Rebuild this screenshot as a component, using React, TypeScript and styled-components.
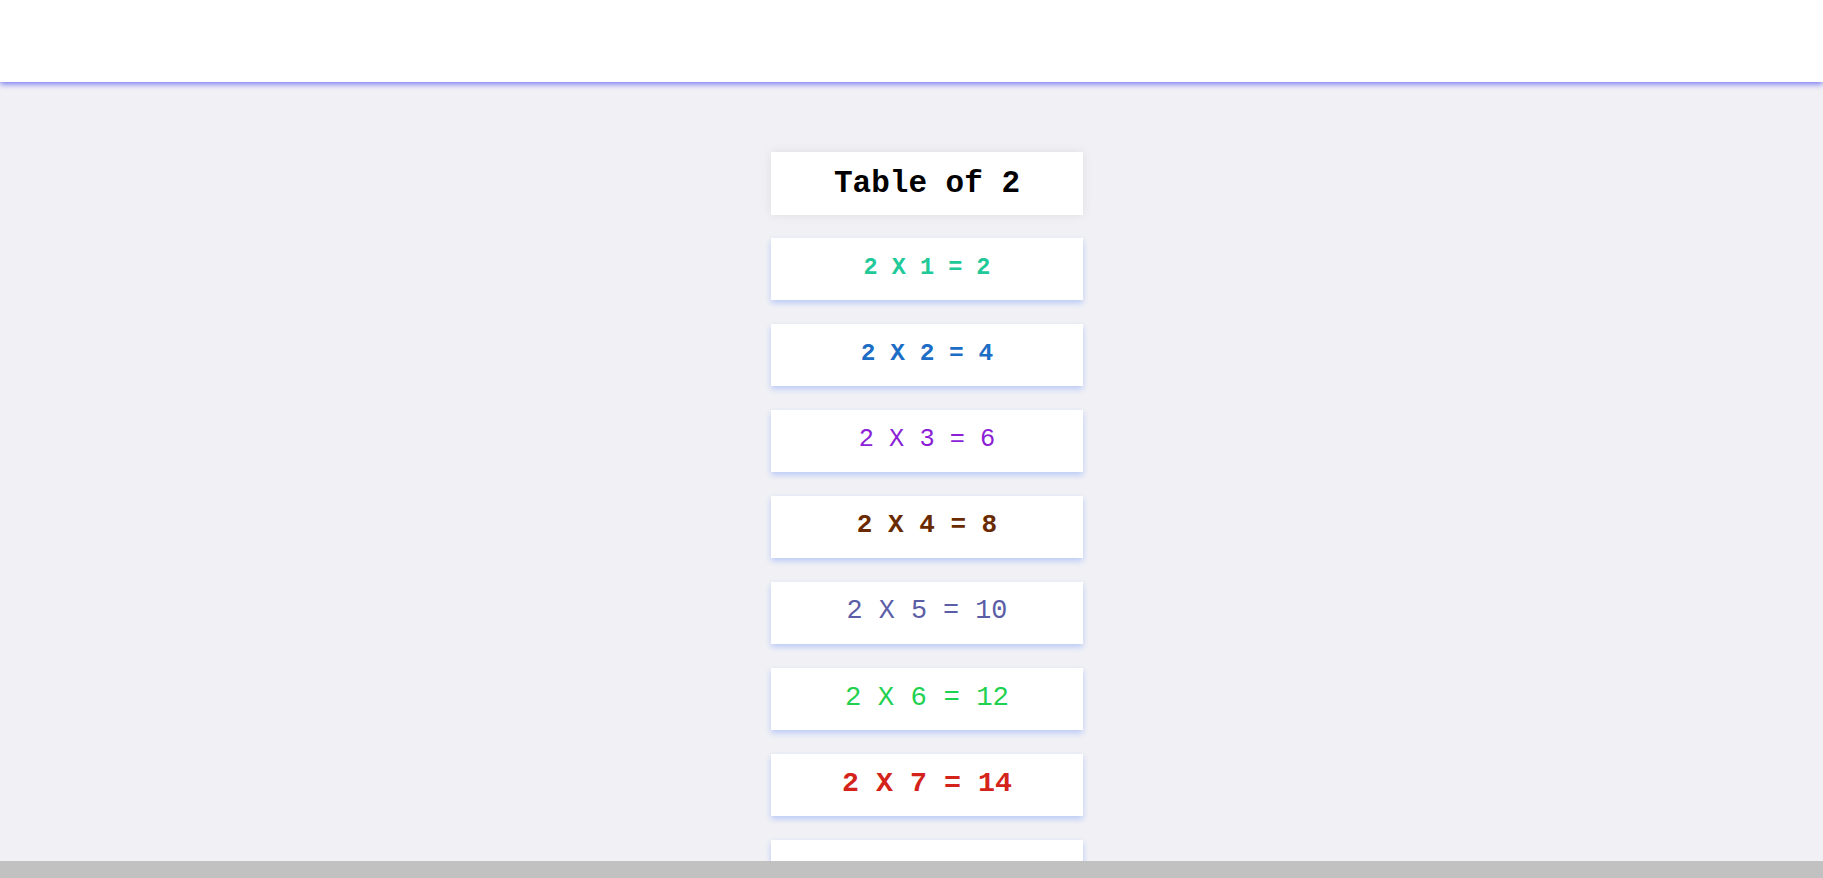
import React from "react";
import styled, { createGlobalStyle } from "styled-components";

const GlobalStyle = createGlobalStyle`
  html, body {
    margin: 0;
    padding: 0;
    background: #f1f1f5;
    font-family: "Courier New", "Nimbus Mono PS", "FreeMono", "Liberation Mono", monospace;
    overflow: hidden;
  }
`;

const Header = styled.header`
  height: 82px;
  background: #ffffff;
  box-shadow: 0 2px 6px #7373f2;
  position: relative;
  z-index: 1;
`;

const Main = styled.main`
  display: flex;
  flex-direction: column;
  align-items: center;
  padding: 70px 0 0 31px;
`;

const TitleCard = styled.div`
  width: 312px;
  height: 63px;
  flex-shrink: 0;
  background: #ffffff;
  box-shadow: 0 0 10px rgba(0, 0, 0, 0.08);
  display: flex;
  align-items: center;
  justify-content: center;
  font-weight: 700;
  font-size: 31px;
  color: #000000;
  margin-bottom: 23px;
`;

const Rows = styled.div`
  display: flex;
  flex-direction: column;
  gap: 24px;
  flex-shrink: 0;
`;

const Row = styled.div<{ $color: string; $size: number; $bold: boolean; $shift: number }>`
  width: 312px;
  height: 62px;
  flex-shrink: 0;
  background: #ffffff;
  box-shadow: 0 3px 6px rgba(120, 155, 250, 0.45);
  display: flex;
  align-items: center;
  justify-content: center;
  padding-bottom: 4px;
  padding-top: ${(p) => p.$shift}px;
  box-sizing: border-box;
  color: ${(p) => p.$color};
  font-size: ${(p) => p.$size}px;
  font-weight: ${(p) => (p.$bold ? 700 : 400)};
`;

const Footer = styled.div`
  position: fixed;
  left: 0;
  right: 0;
  bottom: 0;
  height: 17px;
  background: #c1c1c1;
  z-index: 2;
`;

const rows = [
  { color: "#20c997", size: 23.5, bold: true, shift: 0 },
  { color: "#1c6dc5", size: 24.5, bold: true, shift: 0 },
  { color: "#8b1ed6", size: 25.3, bold: false, shift: 0 },
  { color: "#6a2a00", size: 26, bold: true, shift: 0 },
  { color: "#5b5ea6", size: 26.8, bold: false, shift: 0 },
  { color: "#1ed14f", size: 27.3, bold: false, shift: 0 },
  { color: "#d4231a", size: 28.3, bold: true, shift: 0 },
  { color: "#2a7ab0", size: 24, bold: false, shift: 14 },
];

export default function App() {
  return (
    <>
      <GlobalStyle />
      <Header />
      <Main>
        <TitleCard>Table of 2</TitleCard>
        <Rows>
          {rows.map((r, i) => (
            <Row key={i} $color={r.color} $size={r.size} $bold={r.bold} $shift={r.shift}>
              {`2 X ${i + 1} = ${2 * (i + 1)}`}
            </Row>
          ))}
        </Rows>
      </Main>
      <Footer />
    </>
  );
}
